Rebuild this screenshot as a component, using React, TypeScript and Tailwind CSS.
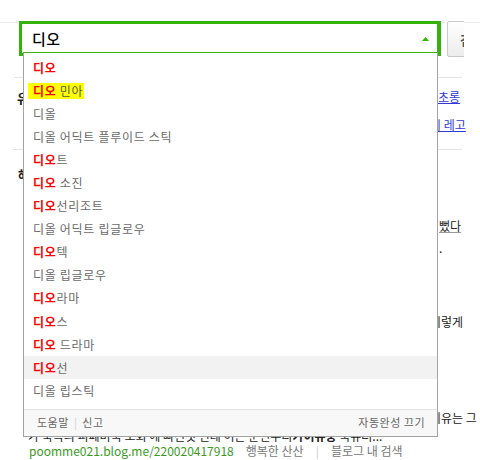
import React from "react";

type Item = { m: string; rest: string };

const items: Item[] = [
  { m: "디오", rest: "" },
  { m: "디오", rest: " 민아" },
  { m: "", rest: "디올" },
  { m: "", rest: "디올 어딕트 플루이드 스틱" },
  { m: "디오", rest: "트" },
  { m: "디오", rest: " 소진" },
  { m: "디오", rest: "선리조트" },
  { m: "", rest: "디올 어딕트 립글로우" },
  { m: "디오", rest: "텍" },
  { m: "", rest: "디올 립글로우" },
  { m: "디오", rest: "라마" },
  { m: "디오", rest: "스" },
  { m: "디오", rest: " 드라마" },
  { m: "디오", rest: "선" },
  { m: "", rest: "디올 립스틱" },
];

function Row({ item, index }: { item: Item; index: number }) {
  const hover = index === 13;
  const marked = index === 1;
  const inner = (
    <>
      {item.m && <span className="font-bold text-[#ff0000]">{item.m}</span>}
      <span className="whitespace-pre">{item.rest}</span>
    </>
  );
  return (
    <li
      className={`flex h-[23.1px] items-center pl-[9px] text-[12px] tracking-[0.7px] text-[#6a6a6a] ${
        hover ? "bg-[#f2f2f2]" : ""
      }`}
    >
      {marked ? (
        <span className="-ml-[5px] flex h-[16px] items-center bg-[#ffff00] pl-[5px] pr-[1px] text-[#555]">
          {inner}
        </span>
      ) : (
        inner
      )}
    </li>
  );
}

export default function App() {
  return (
    <div className="relative h-[460px] w-[480px] overflow-hidden bg-white font-['Noto_Sans_CJK_KR',sans-serif] text-[12px] leading-none text-[#222]">
      {/* search bar */}
      <header className="flex items-start gap-[6px] bg-[linear-gradient(to_bottom,transparent_22px,#ececec_22px,#ececec_23px,transparent_23px)] pl-[19px] pt-[21px]">
        <div className="relative flex h-[35px] w-[422px] shrink-0 items-center border-[3px] border-r-[4px] border-[#33b30b] bg-white pl-[10px]">
          <span className="text-[15px] font-medium tracking-[0.5px] text-black">디오</span>
          <svg
            className="absolute right-[8px] top-[13px]"
            width="7"
            height="4"
            viewBox="0 0 7 4"
          >
            <path d="M3.5 0 L7 4 L0 4 Z" fill="#33b30b" />
          </svg>
        </div>
        <div className="h-[36px] w-[17px] shrink-0 overflow-hidden">
          <button className="h-[36px] w-[50px] rounded-[2px] border border-[#c9c9c9] bg-gradient-to-b from-white to-[#ececec] pl-[12px] text-left text-[13px] font-bold text-[#555]">
            검색
          </button>
        </div>
      </header>

      {/* page content behind the dropdown */}
      <main className="flex flex-col pt-[20px]">
        <div className="ml-[14px] h-px w-[448px] bg-[#e4e4e4]" />
        <div className="h-[8px]" />
        <div className="flex h-[22px] items-center">
          <div className="w-[426px] pl-[17px] text-[13px] font-bold text-[#222]">유사 검색어</div>
          <a className="pl-[12px] text-[#2f3ad6] underline">초롱</a>
        </div>
        <div className="h-[6px]" />
        <div className="flex h-[22px] items-center">
          <div className="w-[426px]" />
          <a className="whitespace-nowrap pl-[4px] text-[#2f3ad6] underline">이 레고</a>
        </div>
        <div className="h-[13px]" />
        <div className="ml-[13px] h-px w-[449px] bg-[#e4e4e4]" />
        <div className="h-[13px]" />
        <div className="flex h-[22px] items-center">
          <div className="w-[426px] pl-[18px] text-[13px] font-bold text-[#222]">해외 블로그</div>
        </div>
        <div className="h-[30px]" />
        <div className="flex h-[22px] items-center">
          <div className="w-[426px]" />
          <span className="pl-[13px] text-[#222] underline decoration-[#999]">뻤다</span>
        </div>
        <div className="flex h-[22px] items-center">
          <div className="w-[426px]" />
          <span className="pl-[13px] text-[#222]">.</span>
        </div>
        <div className="h-[52px]" />
        <div className="flex h-[22px] items-center">
          <div className="w-[426px]" />
          <span className="whitespace-nowrap pl-[4px] text-[#222]">이렇게</span>
        </div>
        <div className="h-[74px]" />
        <div className="flex h-[22px] items-center">
          <div className="w-[426px]" />
          <span className="whitespace-nowrap pl-[4px] text-[#222]">이유는 그</span>
        </div>
        <div className="flex h-[14px] items-center whitespace-nowrap pl-[28px] text-[#222]">
          가 북극의 피폐미국 조회 에 빠진것 인데 이든 분던우디 <b className="font-bold">가이유중</b>&nbsp;국유러...
        </div>
        <div className="flex h-[16px] items-center gap-[12px] whitespace-nowrap pl-[29px]">
          <span className="text-[#3a9a1e]">poomme021.blog.me/220020417918</span>
          <span className="text-[#777]">행복한 산산</span>
          <span className="text-[#ccc]">|</span>
          <span className="text-[#777]">블로그 내 검색</span>
        </div>
      </main>

      {/* autocomplete dropdown */}
      <div className="absolute left-[23px] top-[52px] w-[415px] border border-[#a3a3a3] border-t-[#33b30b] bg-white">
        <ul className="pb-[6.5px] pt-[3px]">
          {items.map((it, i) => (
            <Row key={i} item={it} index={i} />
          ))}
        </ul>
        <div className="flex h-[27px] items-center justify-between border-t border-[#e2e2e2] bg-[#f8f8f8] pl-[13px] pr-[12px] text-[11px] tracking-[0.5px] text-[#666]">
          <div className="flex items-center">
            <span>도움말</span>
            <span className="mx-[5px] text-[#d0d0d0]">|</span>
            <span>신고</span>
          </div>
          <span>자동완성 끄기</span>
        </div>
      </div>
    </div>
  );
}
